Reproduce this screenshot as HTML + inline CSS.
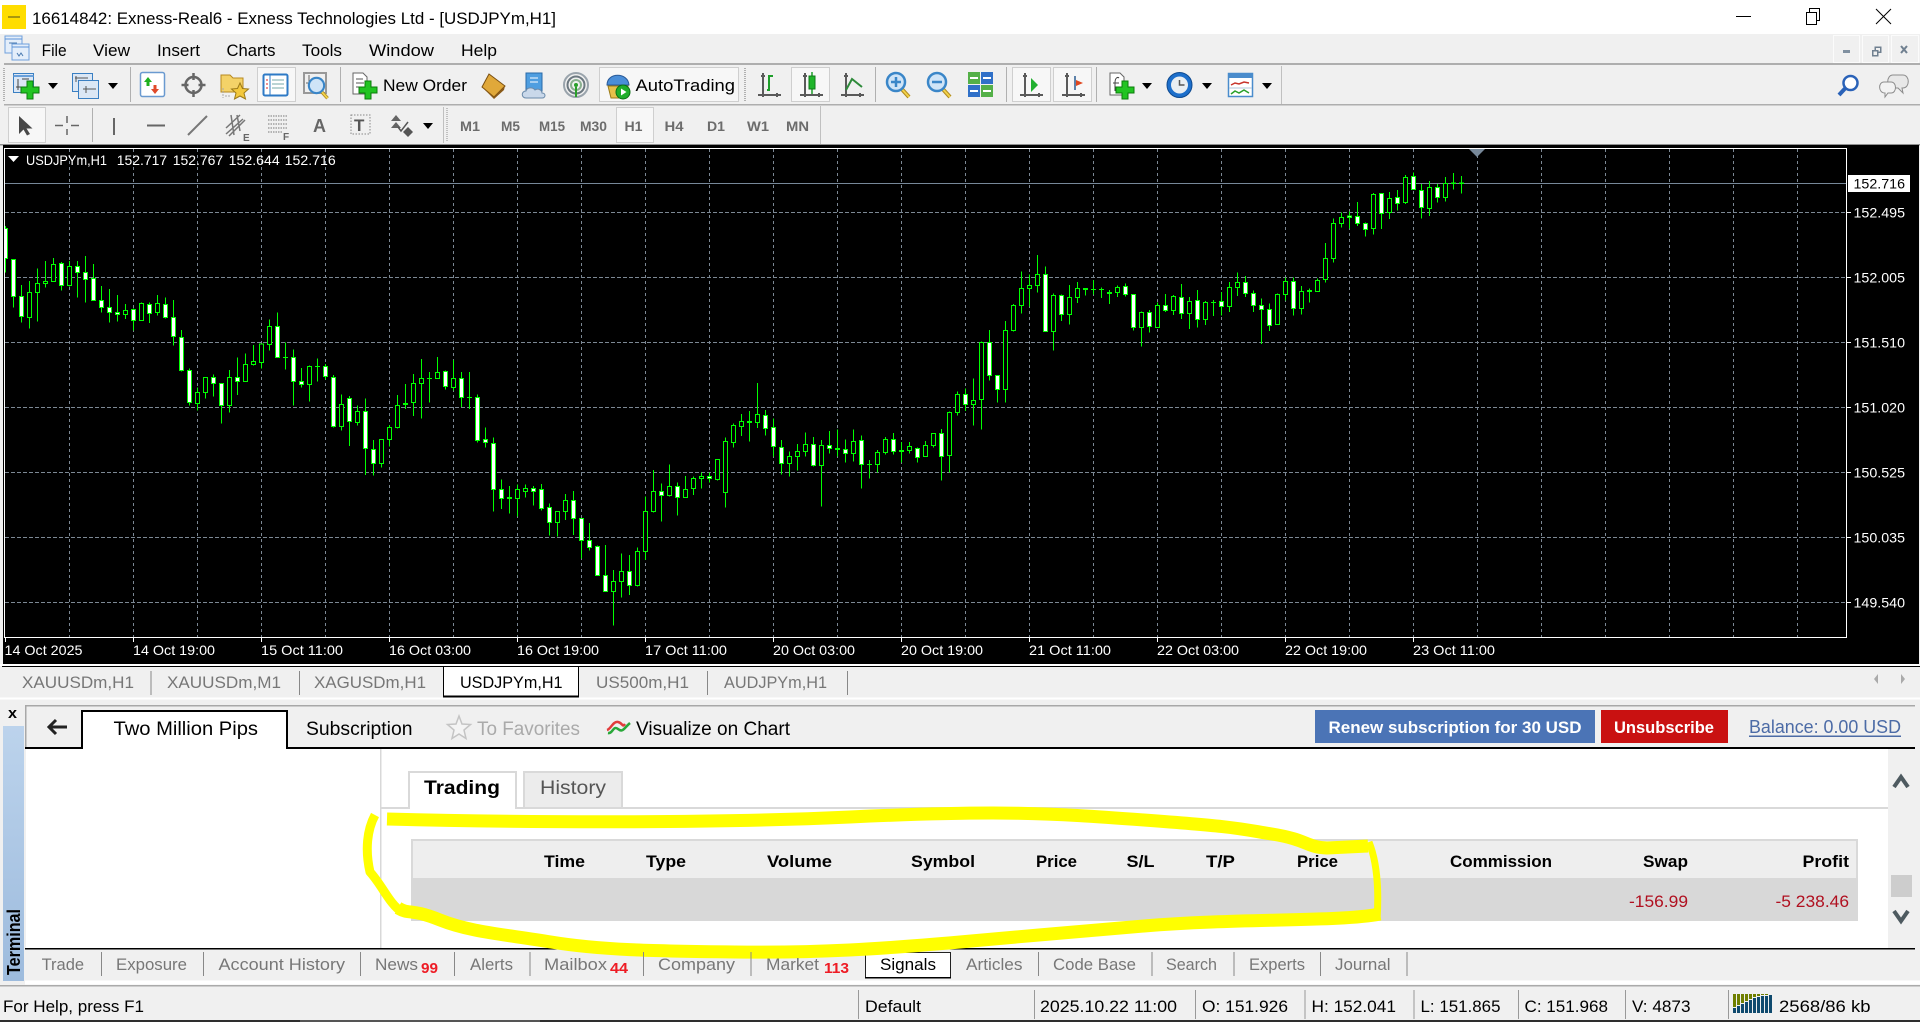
<!DOCTYPE html>
<html><head><meta charset="utf-8"><title>MT5</title>
<style>
html,body{margin:0;padding:0;background:#f0f0f0;overflow:hidden}
svg{display:block}
text{font-family:"Liberation Sans",sans-serif;font-size:17px;fill:#000;white-space:pre}
.c{stroke:#0f0;stroke-width:3;shape-rendering:crispEdges}
.c path{fill:none}
.c rect{width:12px}
.w{fill:#fff}.k{fill:#000}
.ch text{fill:#fff;font-size:14px}
.t text{fill:#777}
.m text{fill:#6c6c6c;font-size:14px;font-weight:bold}
.h text{font-weight:bold}
.b text{fill:#ee1c25;font-weight:bold;font-size:15px}
.g{stroke:#7c8894;stroke-width:1;shape-rendering:crispEdges;fill:none}
.p{fill:#f7f7f7;stroke:#cfcfcf;shape-rendering:crispEdges}
.y{fill:none;stroke:#ff0;stroke-linecap:butt;stroke-linejoin:round}
.ar{fill:#000}
</style></head>
<body>
<svg xmlns="http://www.w3.org/2000/svg" width="1920" height="1022" viewBox="0 0 1920 1022">
<defs>
<g id="plus"><path d="M6 0h6v6h6v6h-6v6h-6v-6h-6v-6h6z" fill="#22c422" stroke="#0b7d0b"/></g>
<g id="ax" fill="none" stroke="#5a5a5a" stroke-width="2"><path d="M5 1V25M0 23H23M3 4h4M19 21v4"/></g>
<g id="mag"><path d="M13 14l10 11" stroke="#b08a20" stroke-width="4"/><path d="M14 15l9 10" stroke="#f2d24a" stroke-width="2"/><circle cx="10" cy="10" r="9" fill="#cfe4f7" stroke="#3a86c8" stroke-width="2.5"/></g>
<linearGradient id="tb" x1="0" y1="0" x2="0" y2="1"><stop offset="0" stop-color="#bcd3ec"/><stop offset="1" stop-color="#9dbbdd"/></linearGradient>
</defs>

<!-- backgrounds -->
<rect width="1920" height="1022" fill="#f0f0f0"/>
<rect width="1920" height="34" fill="#fff"/>

<!-- title bar -->
<rect x="2" y="5" width="24" height="24" fill="#ffdd00"/>
<rect x="8" y="16" width="12" height="2" fill="#a8960e"/>
<text x="32" y="24" textLength="524" lengthAdjust="spacingAndGlyphs">16614842: Exness-Real6 - Exness Technologies Ltd - [USDJPYm,H1]</text>
<path d="M1736 16.500h15" stroke="#000" shape-rendering="crispEdges"/>
<path d="M1806.500 12.500h10v12h-10zM1809.500 12v-3.500h10v12h-3" fill="none" stroke="#000" shape-rendering="crispEdges"/>
<path d="M1876 9l15 15M1891 9l-15 15" stroke="#000" fill="none"/>

<!-- menu bar -->
<g>
<rect x="5" y="36" width="17" height="17" fill="#e4eefa" stroke="#6fa0dc"/>
<rect x="12" y="44" width="17" height="16" fill="#e4eefa" stroke="#6fa0dc"/>
<path d="M5 39h17M12 47h17" stroke="#5b93d8"/>
<path d="M9 43h8M17 53l2 3 2-3 2 3" stroke="#4a7ab0" fill="none"/>
</g>
<text x="41.600" y="56" textLength="25" lengthAdjust="spacingAndGlyphs">File</text>
<text x="93" y="56" textLength="37" lengthAdjust="spacingAndGlyphs">View</text>
<text x="157" y="56" textLength="43" lengthAdjust="spacingAndGlyphs">Insert</text>
<text x="226.500" y="56" textLength="49" lengthAdjust="spacingAndGlyphs">Charts</text>
<text x="302" y="56" textLength="40" lengthAdjust="spacingAndGlyphs">Tools</text>
<text x="369" y="56" textLength="65" lengthAdjust="spacingAndGlyphs">Window</text>
<text x="461" y="56" textLength="36" lengthAdjust="spacingAndGlyphs">Help</text>
<g fill="#f0f0f0" stroke="#fbfbfb" shape-rendering="crispEdges">
<rect x="1833.500" y="35.500" width="26" height="27"/><rect x="1862.500" y="35.500" width="26" height="27"/><rect x="1891.500" y="35.500" width="27" height="27"/>
</g>
<path d="M1843 50h7v3h-7z" fill="#8090a0"/>
<path d="M1872.500 50.500h5v5h-5zM1875 50v-3h5.500v5h-2.500" fill="none" stroke="#708090" stroke-width="1.500" shape-rendering="crispEdges"/>
<path d="M1901 46l6 7M1907 46l-6 7" stroke="#708090" stroke-width="2" fill="none"/>
<rect x="4" y="63" width="1916" height="2" fill="#aeaeae"/>

<!-- toolbar 1 -->
<path d="M4 68v34" stroke="#b0b0b0" stroke-width="2" stroke-dasharray="1 1"/>
<rect x="1281" y="66" width="1" height="38" fill="#c0c0c0"/>
<g transform="translate(13 73)"><rect x=".5" y=".5" width="20" height="19" fill="#dbe7f5" stroke="#3a7fc2"/><path d="M.5 3h20" stroke="#6aa0da" stroke-width="2"/><path d="M5 6v11M3 14h13M9 6h7" stroke="#444" fill="none"/><use href="#plus" x="8" y="8"/></g>
<path d="M48 83h10l-5 6z" class="ar"/>
<g transform="translate(72 73)"><rect x=".5" y=".5" width="20" height="18" fill="#dbe7f5" stroke="#3a7fc2"/><rect x="6.500" y="7.500" width="20" height="18" fill="#dbe7f5" stroke="#3a7fc2"/><path d="M3 5h13M11 16h13M4 3v6M14 13v7" stroke="#555" fill="none"/></g>
<path d="M108 83h10l-5 6z" class="ar"/>
<rect x="130" y="67" width="1" height="35" fill="#b0b0b0"/>
<g transform="translate(140 72)"><rect x=".5" y=".5" width="24" height="24" rx="2" fill="#fff" stroke="#6a9ad0" stroke-width="1.500"/><path d="M6 3l4 5h-2.500v4h-3v-4h-2.500z" fill="#1eb01e" transform="translate(2 2)"/><path d="M14 22l-4-5h2.500v-4h3v4h2.500z" fill="#e04a2a" transform="translate(1 0)"/></g>
<g transform="translate(193.500 85)" stroke="#666" fill="none"><circle r="8" stroke-width="2.500"/><path d="M0-12v7M0 12V5M-12 0h7M12 0H5" stroke-width="2.500"/></g>
<g transform="translate(220 72)"><path d="M1 3h9l3 3h10v14H1z" fill="#f4d268" stroke="#b78a20"/><path d="M3 16v10M5 24h5" stroke="#aaa" stroke-dasharray="2 1" fill="none"/><path d="M20 11l2.500 5.500 6 .5-4.500 4 1.500 6-5.500-3-5.500 3 1.500-6-4.500-4 6-.5z" fill="#f3c83c" stroke="#9c7a18"/></g>
<rect class="p" x="257.500" y="67.500" width="38" height="34"/>
<g transform="translate(263 74)"><rect x=".5" y=".5" width="24" height="21" rx="1.500" fill="#fff" stroke="#2e7ac6" stroke-width="2"/><path d="M7 1v21" stroke="#2e7ac6"/><path d="M9 6h12M9 10h12M9 14h12" stroke="#7aa"/><path d="M3 6h2M3 10h2M3 14h2" stroke="#d22"/></g>
<g transform="translate(303 72)"><rect x="1" y="1" width="22" height="20" fill="#f0f0f0" stroke="#999" stroke-width="2"/><path d="M6 3v10M3 11h14" stroke="#666"/><use href="#mag" transform="translate(5 5) scale(.85)"/></g>
<rect x="340" y="67" width="1" height="35" fill="#b0b0b0"/>
<g transform="translate(352 72)"><path d="M1 1h10l4 4v17H1z" fill="#fff" stroke="#666"/><path d="M4 7h7M4 11h8M4 15h5" stroke="#555"/><use href="#plus" x="7" y="9"/></g>
<text x="383" y="91" textLength="84" lengthAdjust="spacingAndGlyphs">New Order</text>
<g transform="translate(481 73)"><path d="M8 1L24 13l-11 11L1 14z" fill="#e0a83a" stroke="#7a4f10"/><path d="M1 14l12 10 11-11-1 4-10 9z" fill="#8a5a18"/></g>
<g transform="translate(522 72)"><rect x="4" y="1" width="16" height="18" fill="#4f9ee0" stroke="#2a6aa8"/><path d="M8 6h8M8 10h8" stroke="#fff"/><path d="M4 26c-5 0-5-7 0-7 1-4 7-4 9-1 3-2 7 0 7 3 4 0 4 5 0 5z" fill="#c9d8ea" stroke="#6a8aaa"/></g>
<g transform="translate(576 85)" fill="none"><circle r="12" stroke="#9aa4ac" stroke-width="2"/><circle r="8.500" stroke="#6c7880" stroke-width="2"/><circle r="5" stroke="#8ab090" stroke-width="2"/><circle cy="0" r="2" fill="#2aa02a"/><path d="M0 2v10" stroke="#2aa02a" stroke-width="2"/></g>
<rect class="p" x="599.500" y="67.500" width="139" height="34"/>
<g transform="translate(603 72)"><path d="M4 13c0-13 21-13 22 0z" fill="#4a8ed8" stroke="#2a5a98"/><path d="M5 14h20l-3 12H8z" fill="#e6c04a" stroke="#9a7a18"/><circle cx="20" cy="20" r="7" fill="#1fae2a" stroke="#0b7015"/><path d="M18 16.500l5.500 3.500-5.500 3.500z" fill="#fff"/></g>
<text x="635.500" y="91" textLength="99.500" lengthAdjust="spacingAndGlyphs">AutoTrading</text>
<path d="M745 68v34" stroke="#b0b0b0" stroke-width="2" stroke-dasharray="1 1"/>
<use href="#ax" x="758" y="72"/><path d="M769 90v-14h4M767 90h3" stroke="#1e9e2a" stroke-width="2" fill="none"/>
<rect class="p" x="791.500" y="67.500" width="38" height="34"/>
<use href="#ax" x="800" y="72"/><path d="M812 72v22" stroke="#1e9e2a" stroke-width="1.500"/><rect x="809" y="76" width="6" height="13" fill="#1fb52a" stroke="#0f7a18"/>
<use href="#ax" x="841" y="72"/><path d="M846 90l6-11 10 8" stroke="#2e8a3a" stroke-width="2" fill="none"/>
<rect x="875" y="67" width="1" height="35" fill="#b0b0b0"/>
<use href="#mag" x="886" y="72"/><path d="M891 82h10M896 77v10" stroke="#3a86c8" stroke-width="2.500"/>
<use href="#mag" x="927" y="72"/><path d="M932 82h10" stroke="#3a86c8" stroke-width="2.500"/>
<g transform="translate(968 72)" shape-rendering="crispEdges"><rect width="12" height="12" fill="#54b048"/><rect x="13" width="12" height="12" fill="#3070c8"/><rect y="13" width="12" height="12" fill="#3070c8"/><rect x="13" y="13" width="12" height="12" fill="#54b048"/><path d="M2 6h8M15 6h8M2 19h8M15 19h8" stroke="#fff" stroke-width="2"/></g>
<rect x="1006" y="67" width="1" height="35" fill="#b0b0b0"/>
<rect class="p" x="1012.500" y="67.500" width="38" height="34"/>
<use href="#ax" x="1020" y="72"/><path d="M1031 78l7 7-7 7z" fill="#22b030"/>
<rect class="p" x="1053.500" y="67.500" width="38" height="34"/>
<use href="#ax" x="1062" y="72"/><path d="M1075 76v14" stroke="#2a5a90" stroke-width="1.500"/><path d="M1083 83l-7-3v6z" fill="#e04820"/>
<rect x="1096" y="67" width="1" height="35" fill="#b0b0b0"/>
<g transform="translate(1109 72)"><path d="M1 1h10l4 4v18H1z" fill="#fff" stroke="#666"/><path d="M6 11c0-6 3-6 4-5M4 11h6M6 11v8" stroke="#444" fill="none"/><use href="#plus" x="7" y="9"/></g>
<path d="M1142 83h10l-5 6z" class="ar"/>
<g transform="translate(1179.500 85)"><circle r="12.500" fill="#1d6fcb" stroke="#0e4a90"/><circle r="8.500" fill="#e9eef2"/><path d="M0-5v5h5" stroke="#555" stroke-width="1.500" fill="none"/></g>
<path d="M1202 83h10l-5 6z" class="ar"/>
<g transform="translate(1228 73)"><rect x=".5" y=".5" width="24" height="23" fill="#fff" stroke="#4a8ccc" stroke-width="1.500"/><rect x="1" y="1" width="23" height="4" fill="#4a8ccc"/><path d="M3 12l4-2 4 1 5-2 5 1" stroke="#c8342a" stroke-width="1.500" fill="none"/><path d="M1 15h23" stroke="#b0c4d8"/><path d="M3 21l4-3 4 2 5-3 5 3" stroke="#2aa02a" stroke-width="1.500" fill="none"/></g>
<path d="M1262 83h10l-5 6z" class="ar"/>
<g transform="translate(1837 74)"><circle cx="13.500" cy="9" r="7" fill="#fff" stroke="#2a62b8" stroke-width="2.500"/><path d="M8.500 14L2 21" stroke="#2a62b8" stroke-width="4"/></g>
<g transform="translate(1879 73)"><path d="M14 2h10c7 0 7 13 0 13h-1l1 5-5-5h-5c-7 0-7-13 0-13z" fill="#e8e8e8" stroke="#8c8c8c"/><path d="M5 9h7c6 0 6 11 0 11H9l-3 4v-4c-7 0-7-11-1-11z" fill="#f2f2f2" stroke="#8c8c8c"/></g>
<rect x="4" y="104" width="1916" height="1.500" fill="#aeaeae"/>

<!-- toolbar 2 -->
<rect class="p" x="8.500" y="107.500" width="37" height="35"/>
<path d="M19 116v18l4.500-4.500 3.500 6 3-1.500-3.500-5.500h6z" fill="#484848"/>
<path d="M67 116v7M67 129v6M55 125.500h8M71 125.500h8" stroke="#666" stroke-width="1.500"/>
<rect x="92" y="108" width="1" height="34" fill="#b0b0b0"/>
<path d="M114 118v17" stroke="#666" stroke-width="2"/>
<path d="M147 125.500h18" stroke="#666" stroke-width="2"/>
<path d="M188 135l19-19" stroke="#777" stroke-width="2"/>
<g stroke="#777" stroke-width="1.500" fill="none"><path d="M226 128l14-13M226 134l17-15M229 136l16-16M231 115l3 20M237 115l3 16"/></g>
<text x="243" y="141" style="font-size:10px;font-weight:bold;fill:#666">E</text>
<path d="M268 116h20M268 120h20M268 124h20M268 128h20M268 132h14" stroke="#777" stroke-dasharray="1.500 1" stroke-width="1"/>
<text x="283" y="140" style="font-size:10px;font-weight:bold;fill:#666">F</text>
<text x="313" y="132" textLength="13" lengthAdjust="spacingAndGlyphs" style="font-weight:bold;font-size:18px;fill:#666">A</text>
<rect x="351" y="115" width="19" height="19" fill="none" stroke="#888" stroke-dasharray="1.500 1.500"/>
<text x="354" y="131" style="font-size:17px;fill:#555;font-weight:bold">T</text>
<g fill="#555"><path d="M396 115l-5 6h10zM396 122l-5 6h10z" opacity=".9"/><path d="M408 127l-5 5 5 5 5-5z"/><path d="M398 127l3 4 7-9" stroke="#555" stroke-width="1.500" fill="none"/></g>
<path d="M423 123h10l-5 6z" class="ar"/>
<rect x="443" y="107" width="1" height="36" fill="#c0c0c0"/>
<path d="M447 108v34" stroke="#c0c0c0" stroke-width="2" stroke-dasharray="1 1"/>
<g class="m">
<text x="460" y="131" textLength="20" lengthAdjust="spacingAndGlyphs">M1</text>
<text x="501" y="131" textLength="19" lengthAdjust="spacingAndGlyphs">M5</text>
<text x="539" y="131" textLength="26" lengthAdjust="spacingAndGlyphs">M15</text>
<text x="580" y="131" textLength="27" lengthAdjust="spacingAndGlyphs">M30</text>
</g>
<rect class="p" x="616.500" y="107.500" width="37" height="35"/>
<g class="m">
<text x="624.500" y="131" textLength="18" lengthAdjust="spacingAndGlyphs">H1</text>
<text x="664.500" y="131" textLength="19" lengthAdjust="spacingAndGlyphs">H4</text>
<text x="707" y="131" textLength="18" lengthAdjust="spacingAndGlyphs">D1</text>
<text x="747" y="131" textLength="22" lengthAdjust="spacingAndGlyphs">W1</text>
<text x="786" y="131" textLength="23" lengthAdjust="spacingAndGlyphs">MN</text>
</g>
<rect x="820" y="106" width="1" height="38" fill="#c0c0c0"/>
<rect y="144" width="1920" height="1.500" fill="#909090"/>

<!-- chart -->
<rect x="3" y="145" width="1916" height="519" fill="#000"/>
<g class="g">
<path stroke-dasharray="4 2" d="M5 212.500H1846M5 277.500H1846M5 342.500H1846M5 407.500H1846M5 472.500H1846M5 537.500H1846M5 602.500H1846"/>
<path stroke-dasharray="3 3" d="M69.500 149V637M133.500 149V637M197.500 149V637M261.500 149V637M325.500 149V637M389.500 149V637M453.500 149V637M517.500 149V637M581.500 149V637M645.500 149V637M709.500 149V637M773.500 149V637M837.500 149V637M901.500 149V637M965.500 149V637M1029.500 149V637M1093.500 149V637M1157.500 149V637M1221.500 149V637M1285.500 149V637M1349.500 149V637M1413.500 149V637M1477.500 149V637M1541.500 149V637M1605.500 149V637M1669.500 149V637M1733.500 149V637M1797.500 149V637"/>
</g>
<path d="M5 183.500H1846" stroke="#789" shape-rendering="crispEdges"/>

<g class="c" transform="translate(.1667 140) scale(.33333)">
<path d="M16 258V398M40 357V503M64 435V548M88 423V566M112 385V545M136 363V443M160 354V424M184 366V452M208 363V440M232 363V473M256 348V488M280 372V482M304 438V518M328 447V548M352 465V545M376 492V537M400 505V572M424 487V542M448 487V549M472 465V527M496 472V535M520 480V617M544 570V694M568 685V796M592 742V812M616 712V776M640 703V770M664 730V851M688 690V818M712 652V765M736 640V724M760 615V676M784 612V686M808 538V632M832 517V652M856 607V689M880 628V797M904 684V743M928 677V785M952 655V725"/>
<g class="w"><rect x="10" y="265" height="90"/><rect x="34" y="358" height="112"/><rect x="58" y="470" height="59"/><rect x="178" y="370" height="66"/><rect x="226" y="379" height="18"/><rect x="250" y="397" height="21"/><rect x="274" y="415" height="67"/><rect x="298" y="481" height="21"/><rect x="322" y="502" height="15"/><rect x="346" y="517" height="7"/><rect x="394" y="508" height="33"/><rect x="442" y="493" height="28"/><rect x="490" y="493" height="39"/><rect x="514" y="532" height="57"/><rect x="538" y="592" height="99"/><rect x="562" y="691" height="96"/><rect x="634" y="712" height="18"/><rect x="658" y="730" height="66"/><rect x="706" y="712" height="12"/><rect x="826" y="559" height="93"/><rect x="850" y="652" height="1"/><rect x="874" y="652" height="72"/><rect x="898" y="724" height="9"/><rect x="946" y="679" height="1"/></g>
<g class="k"><rect x="82" y="458" height="74"/><rect x="106" y="430" height="28"/><rect x="130" y="424" height="6"/><rect x="154" y="373" height="51"/><rect x="202" y="379" height="57"/><rect x="370" y="511" height="13"/><rect x="418" y="490" height="51"/><rect x="466" y="490" height="27"/><rect x="586" y="757" height="33"/><rect x="610" y="712" height="45"/><rect x="682" y="712" height="84"/><rect x="730" y="673" height="51"/><rect x="754" y="664" height="9"/><rect x="778" y="612" height="55"/><rect x="802" y="559" height="54"/><rect x="922" y="679" height="54"/></g>
</g>

<g class="c" transform="translate(320.1667 340) scale(.33333)">
<path d="M16 72V118M40 105V262M64 163V272M88 168V318M112 196V257M136 175V405M160 300V407M184 297V383M208 255V320M232 165V266M256 132V207M280 102V228M304 57V236M328 96V188M352 51V117M376 91V149M400 60V151M424 96V201M448 96V207M472 163V308M496 262V323M520 292V515M544 418V507M568 438V521M592 433V529M616 433V473M640 438V497M664 432V512M688 490V587M712 514V590M736 462V540M760 453V585M784 535V656M808 549V632M832 616V708M856 615V755M880 690V857M904 640V773M928 645V765M952 622V740M976 470V660M1000 390V518M1024 430V545M1048 373V470M1072 427V527M1096 408V473M1120 410V465M1144 397V446M1168 397V428M1192 357V422M1216 292V503M1240 250V323M1264 222V288M1288 213V305M1312 129V264M1336 210V287M1360 235V350M1384 300V404M1408 334V410M1432 312V392M1456 277V350"/>
<g class="w"><rect x="10" y="80" height="29"/><rect x="34" y="112" height="147"/><rect x="82" y="175" height="69"/><rect x="130" y="214" height="111"/><rect x="154" y="328" height="43"/><rect x="250" y="190" height="3"/><rect x="322" y="115" height="1"/><rect x="370" y="94" height="45"/><rect x="418" y="115" height="57"/><rect x="442" y="172" height="1"/><rect x="466" y="172" height="129"/><rect x="490" y="298" height="9"/><rect x="514" y="310" height="138"/><rect x="538" y="448" height="27"/><rect x="562" y="473" height="2"/><rect x="634" y="445" height="9"/><rect x="658" y="448" height="57"/><rect x="682" y="502" height="45"/><rect x="754" y="481" height="54"/><rect x="778" y="535" height="66"/><rect x="802" y="601" height="21"/><rect x="826" y="619" height="87"/><rect x="850" y="706" height="48"/><rect x="922" y="694" height="42"/><rect x="1018" y="454" height="12"/><rect x="1066" y="439" height="33"/><rect x="1162" y="409" height="6"/><rect x="1282" y="244" height="3"/><rect x="1330" y="226" height="39"/><rect x="1354" y="262" height="57"/><rect x="1378" y="322" height="48"/></g>
<g class="k"><rect x="58" y="193" height="66"/><rect x="106" y="214" height="33"/><rect x="178" y="298" height="73"/><rect x="202" y="262" height="37"/><rect x="226" y="196" height="67"/><rect x="274" y="130" height="58"/><rect x="298" y="115" height="15"/><rect x="346" y="97" height="19"/><rect x="394" y="115" height="27"/><rect x="586" y="448" height="27"/><rect x="610" y="445" height="9"/><rect x="706" y="514" height="33"/><rect x="730" y="481" height="33"/><rect x="874" y="724" height="30"/><rect x="898" y="694" height="30"/><rect x="946" y="634" height="102"/><rect x="970" y="514" height="120"/><rect x="994" y="454" height="60"/><rect x="1042" y="439" height="27"/><rect x="1090" y="448" height="24"/><rect x="1114" y="415" height="30"/><rect x="1138" y="409" height="6"/><rect x="1186" y="358" height="60"/><rect x="1210" y="304" height="153"/><rect x="1234" y="256" height="51"/><rect x="1258" y="244" height="15"/><rect x="1306" y="223" height="25"/><rect x="1402" y="349" height="21"/><rect x="1426" y="334" height="15"/><rect x="1450" y="313" height="21"/></g>
</g>

<g class="c" transform="translate(810.1667 240) scale(.33333)">
<path d="M10 591V680M34 600V800M58 573V641M82 568V650M106 598V668M130 568V665M154 586V746M178 660V716M202 630V698M226 591V644M250 579V644M274 606V668M298 606V641M322 623V668M346 603V650M370 580V623M394 567V722M418 514V697M442 454V527M466 446V513M490 415V557M514 304V569M538 270V422M562 406V488M586 243V488M610 192V275M634 94V221M658 103V199M682 45V158M706 79V275M730 160V332M754 163V243M778 135V254M802 126V189M826 145V167M850 120V163M874 142V174M898 150V192M922 136V171M946 130V170M970 163V272M994 214V320M1018 210V278M1042 187V263M1066 162V216M1090 165V225M1114 132V237M1138 171V267M1162 150V263M1186 183V255M1210 180V228M1234 156V226M1258 126V216M1282 97V168M1306 108V171M1330 151V216M1354 175V312M1378 190V273M1402 160V254M1426 112V182M1450 113V227M1474 138V224"/>
<g class="w"><rect x="4" y="613" height="64"/><rect x="52" y="616" height="10"/><rect x="76" y="625" height="4"/><rect x="100" y="628" height="12"/><rect x="148" y="601" height="72"/><rect x="172" y="673" height="1"/><rect x="244" y="598" height="36"/><rect x="268" y="631" height="3"/><rect x="316" y="625" height="27"/><rect x="388" y="580" height="69"/><rect x="460" y="463" height="30"/><rect x="532" y="307" height="99"/><rect x="556" y="406" height="42"/><rect x="700" y="103" height="171"/><rect x="748" y="166" height="57"/><rect x="820" y="145" height="3"/><rect x="844" y="148" height="1"/><rect x="868" y="148" height="1"/><rect x="892" y="157" height="3"/><rect x="940" y="139" height="24"/><rect x="964" y="163" height="99"/><rect x="1012" y="217" height="42"/><rect x="1060" y="196" height="15"/><rect x="1108" y="172" height="48"/><rect x="1156" y="181" height="57"/><rect x="1204" y="187" height="1"/><rect x="1228" y="184" height="15"/><rect x="1300" y="127" height="33"/><rect x="1324" y="160" height="36"/><rect x="1348" y="196" height="12"/><rect x="1372" y="208" height="48"/><rect x="1444" y="124" height="81"/></g>
<g class="k"><rect x="28" y="616" height="61"/><rect x="124" y="604" height="36"/><rect x="196" y="637" height="37"/><rect x="220" y="598" height="39"/><rect x="292" y="619" height="13"/><rect x="340" y="616" height="34"/><rect x="364" y="580" height="36"/><rect x="412" y="517" height="129"/><rect x="436" y="463" height="54"/><rect x="484" y="481" height="12"/><rect x="508" y="307" height="171"/><rect x="580" y="271" height="177"/><rect x="604" y="196" height="75"/><rect x="628" y="145" height="51"/><rect x="652" y="136" height="9"/><rect x="676" y="103" height="33"/><rect x="724" y="166" height="108"/><rect x="772" y="172" height="51"/><rect x="796" y="145" height="27"/><rect x="916" y="142" height="15"/><rect x="988" y="217" height="46"/><rect x="1036" y="196" height="66"/><rect x="1084" y="169" height="42"/><rect x="1132" y="184" height="36"/><rect x="1180" y="187" height="51"/><rect x="1252" y="142" height="57"/><rect x="1276" y="127" height="15"/><rect x="1396" y="163" height="91"/><rect x="1420" y="124" height="39"/><rect x="1468" y="154" height="51"/></g>
</g>

<g class="c" transform="translate(1280.1667 165) scale(.33333)">
<path d="M88 370V413M112 340V381M136 234V353M160 160V293M184 142V188M208 140V191M232 111V183M256 172V215M280 84V209M304 84V192M328 81V162M352 75V137M376 30V117M400 22V75M424 57V161M448 48V153M472 57V113M496 36V110M520 24V74M544 33V86"/>
<g class="w"><rect x="82" y="376" height="4"/><rect x="202" y="153" height="5"/><rect x="226" y="154" height="22"/><rect x="250" y="175" height="18"/><rect x="298" y="85" height="61"/><rect x="346" y="97" height="19"/><rect x="394" y="34" height="40"/><rect x="418" y="76" height="52"/><rect x="466" y="67" height="31"/><rect x="514" y="54" height="1"/><rect x="538" y="54" height="1"/></g>
<g class="k"><rect x="106" y="346" height="34"/><rect x="130" y="280" height="64"/><rect x="154" y="175" height="106"/><rect x="178" y="157" height="19"/><rect x="274" y="88" height="103"/><rect x="322" y="100" height="42"/><rect x="370" y="37" height="76"/><rect x="442" y="67" height="64"/><rect x="490" y="55" height="43"/></g>
</g>

<!-- chart frame -->
<rect x="3" y="145" width="1.500" height="519" fill="#000"/>
<path d="M4.500 148.500H1846.500V637.500H4.500z" fill="none" stroke="#fff" shape-rendering="crispEdges"/>
<path d="M1469 149h16l-8 8z" fill="#789"/>
<path d="M8 156h11l-5.500 6z" fill="#fff"/>
<g class="ch">
<text x="26" y="165" textLength="81" lengthAdjust="spacingAndGlyphs">USDJPYm,H1</text>
<text x="116.700" y="165" textLength="50.500" lengthAdjust="spacingAndGlyphs">152.717</text>
<text x="172.700" y="165" textLength="50.500" lengthAdjust="spacingAndGlyphs">152.767</text>
<text x="228.700" y="165" textLength="51" lengthAdjust="spacingAndGlyphs">152.644</text>
<text x="284.700" y="165" textLength="51" lengthAdjust="spacingAndGlyphs">152.716</text>
<text x="1853.500" y="217.500" textLength="51.500" lengthAdjust="spacingAndGlyphs">152.495</text>
<text x="1853.500" y="282.500" textLength="51.500" lengthAdjust="spacingAndGlyphs">152.005</text>
<text x="1853.500" y="347.500" textLength="51.500" lengthAdjust="spacingAndGlyphs">151.510</text>
<text x="1853.500" y="412.500" textLength="51.500" lengthAdjust="spacingAndGlyphs">151.020</text>
<text x="1853.500" y="477.500" textLength="51.500" lengthAdjust="spacingAndGlyphs">150.525</text>
<text x="1853.500" y="542.500" textLength="51.500" lengthAdjust="spacingAndGlyphs">150.035</text>
<text x="1853.500" y="607.500" textLength="51.500" lengthAdjust="spacingAndGlyphs">149.540</text>
</g>
<rect x="1848" y="175" width="62" height="17" fill="#fff"/>
<text x="1853.500" y="188.500" textLength="51.500" lengthAdjust="spacingAndGlyphs" style="font-size:14px">152.716</text>
<path d="M1847 212.500h4M1847 277.500h4M1847 342.500h4M1847 407.500h4M1847 472.500h4M1847 537.500h4M1847 602.500h4" stroke="#fff" shape-rendering="crispEdges"/>
<path d="M5.500 638v4M133.500 638v4M261.500 638v4M389.500 638v4M517.500 638v4M645.500 638v4M773.500 638v4M901.500 638v4M1029.500 638v4M1157.500 638v4M1285.500 638v4M1413.500 638v4" stroke="#fff" shape-rendering="crispEdges"/>
<g class="ch">
<text x="4.500" y="655" textLength="78" lengthAdjust="spacingAndGlyphs">14 Oct 2025</text>
<text x="133" y="655" textLength="82" lengthAdjust="spacingAndGlyphs">14 Oct 19:00</text>
<text x="261" y="655" textLength="82" lengthAdjust="spacingAndGlyphs">15 Oct 11:00</text>
<text x="389" y="655" textLength="82" lengthAdjust="spacingAndGlyphs">16 Oct 03:00</text>
<text x="517" y="655" textLength="82" lengthAdjust="spacingAndGlyphs">16 Oct 19:00</text>
<text x="645" y="655" textLength="82" lengthAdjust="spacingAndGlyphs">17 Oct 11:00</text>
<text x="773" y="655" textLength="82" lengthAdjust="spacingAndGlyphs">20 Oct 03:00</text>
<text x="901" y="655" textLength="82" lengthAdjust="spacingAndGlyphs">20 Oct 19:00</text>
<text x="1029" y="655" textLength="82" lengthAdjust="spacingAndGlyphs">21 Oct 11:00</text>
<text x="1157" y="655" textLength="82" lengthAdjust="spacingAndGlyphs">22 Oct 03:00</text>
<text x="1285" y="655" textLength="82" lengthAdjust="spacingAndGlyphs">22 Oct 19:00</text>
<text x="1413" y="655" textLength="82" lengthAdjust="spacingAndGlyphs">23 Oct 11:00</text>
</g>

<!-- chart tabs -->
<rect y="664" width="1920" height="2" fill="#fff"/>
<rect x="2" y="666" width="1918" height="1" fill="#000"/>
<rect x="443.500" y="666.500" width="135" height="29.500" fill="#fff" stroke="#000" shape-rendering="crispEdges"/>
<rect x="443" y="696" width="136" height="1.500" fill="#000"/>
<rect y="697.500" width="1920" height="2" fill="#fff"/>
<g class="t">
<text x="22" y="688" textLength="112" lengthAdjust="spacingAndGlyphs">XAUUSDm,H1</text>
<text x="167" y="688" textLength="114" lengthAdjust="spacingAndGlyphs">XAUUSDm,M1</text>
<text x="314" y="688" textLength="112" lengthAdjust="spacingAndGlyphs">XAGUSDm,H1</text>
<text x="596" y="688" textLength="93" lengthAdjust="spacingAndGlyphs">US500m,H1</text>
<text x="724" y="688" textLength="103" lengthAdjust="spacingAndGlyphs">AUDJPYm,H1</text>
</g>
<text x="460" y="688" textLength="102.500" lengthAdjust="spacingAndGlyphs">USDJPYm,H1</text>
<path d="M151 671v24M299.500 671v24M707.500 671v24M847.500 671v24" stroke="#888" shape-rendering="crispEdges"/>
<path d="M1878 674l-4 5 4 5zM1901 674l4 5-4 5z" fill="#aaa"/>

<!-- terminal -->
<text x="8" y="718" textLength="9" lengthAdjust="spacingAndGlyphs" style="font-weight:bold;font-size:15px">x</text>
<rect x="3" y="726" width="21" height="255" fill="url(#tb)"/>
<text transform="translate(20 975) rotate(-90)" textLength="66" lengthAdjust="spacingAndGlyphs" style="font-weight:bold;font-size:18px">Terminal</text>
<rect x="25" y="705" width="1890" height="1.500" fill="#a8a8a8"/>
<rect x="25" y="705" width="1.500" height="43" fill="#a8a8a8"/>
<rect x="25" y="747" width="1890" height="2" fill="#000"/>
<rect x="83" y="711" width="204" height="38" fill="#fff"/>
<path d="M82 749V711H287V749" fill="none" stroke="#000" stroke-width="2" shape-rendering="crispEdges"/>
<path d="M67 727H49M56 720l-7 7 7 7" fill="none" stroke="#222" stroke-width="3"/>
<text x="113.500" y="735" textLength="144.500" lengthAdjust="spacingAndGlyphs" style="font-size:19px">Two Million Pips</text>
<text x="306" y="735" textLength="106.500" lengthAdjust="spacingAndGlyphs" style="font-size:19px">Subscription</text>
<path d="M459 716l3 8 8.500.5-6.500 5.500 2 8.500-7-4.500-7 4.500 2-8.500-6.500-5.500 8.500-.5z" fill="#f4f4f4" stroke="#c4c4c4" stroke-width="1.500"/>
<text x="477" y="735" textLength="103" lengthAdjust="spacingAndGlyphs" style="font-size:19px;fill:#aaa">To Favorites</text>
<path d="M607 730c4-1 6-9 11-8s4 6 7 2" fill="none" stroke="#e23c3c" stroke-width="2.500"/>
<path d="M608 733c5 1 5-8 10-4s6-1 12-6" fill="none" stroke="#2aa83a" stroke-width="2.500"/>
<text x="636" y="735" textLength="154" lengthAdjust="spacingAndGlyphs" style="font-size:19px">Visualize on Chart</text>
<rect x="1315" y="710" width="280" height="33" fill="#4b74b6"/>
<text x="1328.500" y="733" textLength="253" lengthAdjust="spacingAndGlyphs" style="font-weight:bold;fill:#fff">Renew subscription for 30 USD</text>
<rect x="1601" y="710" width="127" height="33" fill="#c91111"/>
<text x="1614" y="733" textLength="100" lengthAdjust="spacingAndGlyphs" style="font-weight:bold;fill:#fff">Unsubscribe</text>
<text x="1749" y="733" textLength="152" lengthAdjust="spacingAndGlyphs" style="font-size:18px;fill:#4c6ba6">Balance: 0.00 USD</text>
<rect x="1749" y="735.500" width="152" height="1.500" fill="#4c6ba6"/>

<!-- content -->
<rect x="26" y="749" width="1889" height="199" fill="#fff"/>
<rect x="380" y="749" width="1.500" height="199" fill="#d8d8d8"/>
<rect x="1888" y="749" width="27" height="199" fill="#f0f0f0"/>
<path d="M1894 787l7-10 7 10" fill="none" stroke="#4e5a60" stroke-width="4"/>
<rect x="1891" y="875" width="21" height="22" fill="#cdcdcd"/>
<path d="M1894 911l7 10 7-10" fill="none" stroke="#4e5a60" stroke-width="4"/>
<rect x="381" y="807" width="1507" height="2" fill="#d9d9d9"/>
<path d="M409 808V772H516V808" fill="none" stroke="#d9d9d9" stroke-width="2"/>
<rect x="410" y="773" width="105" height="36" fill="#fff"/>
<rect x="524" y="772" width="98" height="36" fill="#ececec" stroke="#d9d9d9" stroke-width="2"/>
<text x="424" y="794" textLength="76" lengthAdjust="spacingAndGlyphs" style="font-weight:bold;font-size:19px">Trading</text>
<text x="540" y="794" textLength="66" lengthAdjust="spacingAndGlyphs" style="font-size:19px;fill:#555">History</text>

<rect x="411" y="839" width="1447" height="39" fill="#eeeeee"/>
<path d="M412 878V840H1857V878" fill="none" stroke="#d9d9d9" stroke-width="2"/>
<rect x="411" y="878" width="1447" height="43" fill="#d8d8d8"/>
<g class="h">
<text x="544" y="867" textLength="41" lengthAdjust="spacingAndGlyphs">Time</text>
<text x="646" y="867" textLength="40" lengthAdjust="spacingAndGlyphs">Type</text>
<text x="767" y="867" textLength="65" lengthAdjust="spacingAndGlyphs">Volume</text>
<text x="911" y="867" textLength="64" lengthAdjust="spacingAndGlyphs">Symbol</text>
<text x="1036" y="867" textLength="41" lengthAdjust="spacingAndGlyphs">Price</text>
<text x="1126.500" y="867" textLength="28" lengthAdjust="spacingAndGlyphs">S/L</text>
<text x="1206" y="867" textLength="29" lengthAdjust="spacingAndGlyphs">T/P</text>
<text x="1297" y="867" textLength="41" lengthAdjust="spacingAndGlyphs">Price</text>
<text x="1450" y="867" textLength="102" lengthAdjust="spacingAndGlyphs">Commission</text>
<text x="1643" y="867" textLength="45" lengthAdjust="spacingAndGlyphs">Swap</text>
<text x="1802.500" y="867" textLength="46.500" lengthAdjust="spacingAndGlyphs">Profit</text>
</g>
<text x="1629" y="907" textLength="59" lengthAdjust="spacingAndGlyphs" style="fill:#b01020">-156.99</text>
<text x="1775.500" y="907" textLength="73.500" lengthAdjust="spacingAndGlyphs" style="fill:#b01020">-5 238.46</text>

<!-- bottom tabs -->
<rect x="25" y="948" width="1890" height="1.500" fill="#000"/>
<rect x="25" y="949.500" width="1890" height="31" fill="#f0f0f0"/>
<rect x="25" y="980.500" width="1895" height="4" fill="#fff"/>
<rect y="985" width="1920" height="1.500" fill="#aaa"/>
<rect x="865.500" y="952.500" width="85" height="25" fill="#fff" stroke="#222" shape-rendering="crispEdges"/>
<rect x="865" y="977" width="86" height="1.500" fill="#000"/>

<!-- yellow marker -->
<path class="y" stroke-width="13" d="M387 819C500 822 700 824 850 817S1050 813 1144 820S1235 828 1272 834S1305 847 1327 848L1368 846"/>
<path class="y" stroke-width="7" d="M1369 842C1377 862 1379 890 1377 920"/>
<path class="y" stroke-width="13" d="M1380 914C1340 922 1240 918 1144 926S1040 935 960 942S820 953 735 952S600 950 551 942S470 932 440 920S410 915 398 908"/>
<path class="y" stroke-width="9" d="M402 912C390 905 382 885 370 872C365 850 367 830 375 815"/>

<g class="t">
<text x="41.600" y="970" textLength="42.500" lengthAdjust="spacingAndGlyphs">Trade</text>
<text x="116" y="970" textLength="71" lengthAdjust="spacingAndGlyphs">Exposure</text>
<text x="218.500" y="970" textLength="126.500" lengthAdjust="spacingAndGlyphs">Account History</text>
<text x="375" y="970" textLength="43" lengthAdjust="spacingAndGlyphs">News</text>
<text x="470" y="970" textLength="43" lengthAdjust="spacingAndGlyphs">Alerts</text>
<text x="544" y="970" textLength="63" lengthAdjust="spacingAndGlyphs">Mailbox</text>
<text x="658" y="970" textLength="77" lengthAdjust="spacingAndGlyphs">Company</text>
<text x="766" y="970" textLength="53" lengthAdjust="spacingAndGlyphs">Market</text>
<text x="966" y="970" textLength="56.500" lengthAdjust="spacingAndGlyphs">Articles</text>
<text x="1053" y="970" textLength="83" lengthAdjust="spacingAndGlyphs">Code Base</text>
<text x="1166" y="970" textLength="51" lengthAdjust="spacingAndGlyphs">Search</text>
<text x="1249" y="970" textLength="56" lengthAdjust="spacingAndGlyphs">Experts</text>
<text x="1335" y="970" textLength="55.500" lengthAdjust="spacingAndGlyphs">Journal</text>
</g>
<text x="880" y="970" textLength="56" lengthAdjust="spacingAndGlyphs">Signals</text>
<g class="b">
<text x="421" y="973" textLength="17" lengthAdjust="spacingAndGlyphs">99</text>
<text x="610" y="973" textLength="18" lengthAdjust="spacingAndGlyphs">44</text>
<text x="824" y="973" textLength="25" lengthAdjust="spacingAndGlyphs">113</text>
</g>
<path d="M101.500 952v24M203.500 952v24M360.500 952v24M454.500 952v24M530 952v24M643.500 952v24M751 952v24M1038.500 952v24M1152 952v24M1234 952v24M1320.500 952v24M1407 952v24" stroke="#888" shape-rendering="crispEdges"/>

<!-- status bar -->
<text x="3" y="1012" textLength="141" lengthAdjust="spacingAndGlyphs">For Help, press F1</text>
<text x="865" y="1012" textLength="56" lengthAdjust="spacingAndGlyphs">Default</text>
<text x="1040" y="1012" textLength="137" lengthAdjust="spacingAndGlyphs">2025.10.22 11:00</text>
<text x="1202" y="1012" textLength="86" lengthAdjust="spacingAndGlyphs">O: 151.926</text>
<text x="1311.500" y="1012" textLength="84.500" lengthAdjust="spacingAndGlyphs">H: 152.041</text>
<text x="1420.500" y="1012" textLength="80" lengthAdjust="spacingAndGlyphs">L: 151.865</text>
<text x="1524.500" y="1012" textLength="83.500" lengthAdjust="spacingAndGlyphs">C: 151.968</text>
<text x="1632" y="1012" textLength="58.500" lengthAdjust="spacingAndGlyphs">V: 4873</text>
<text x="1779" y="1012" textLength="91.500" lengthAdjust="spacingAndGlyphs">2568/86 kb</text>
<path d="M858.500 990v29M1034.500 990v29M1195.500 990v29M1305 990v29M1414 990v29M1518.500 990v29M1625.500 990v29M1728.500 990v29" stroke="#999" shape-rendering="crispEdges"/>
<g shape-rendering="crispEdges">
<path d="M1733 994h3v13h-3zM1737 994h3v11h-3zM1741 994h3v9h-3zM1745 994h3v7h-3zM1749 994h3v5h-3zM1753 994h3v3h-3zM1757 994h3v2h-3zM1761 994h3v1h-3zM1765 994h3v1h-3z" fill="#6f7f00"/>
<path d="M1733 1008h3v5h-3zM1737 1006h3v7h-3zM1741 1004h3v9h-3zM1745 1002h3v11h-3zM1749 1000h3v13h-3zM1753 998h3v15h-3zM1757 997h3v16h-3zM1761 996h3v17h-3zM1765 996h3v17h-3zM1769 995h3v18h-3z" fill="#0f4a6e"/>
</g>
<rect y="1020" width="1920" height="2" fill="#2e2e2e"/>
<rect x="300" y="1020" width="240" height="2" fill="#555"/>
</svg>
</body></html>
